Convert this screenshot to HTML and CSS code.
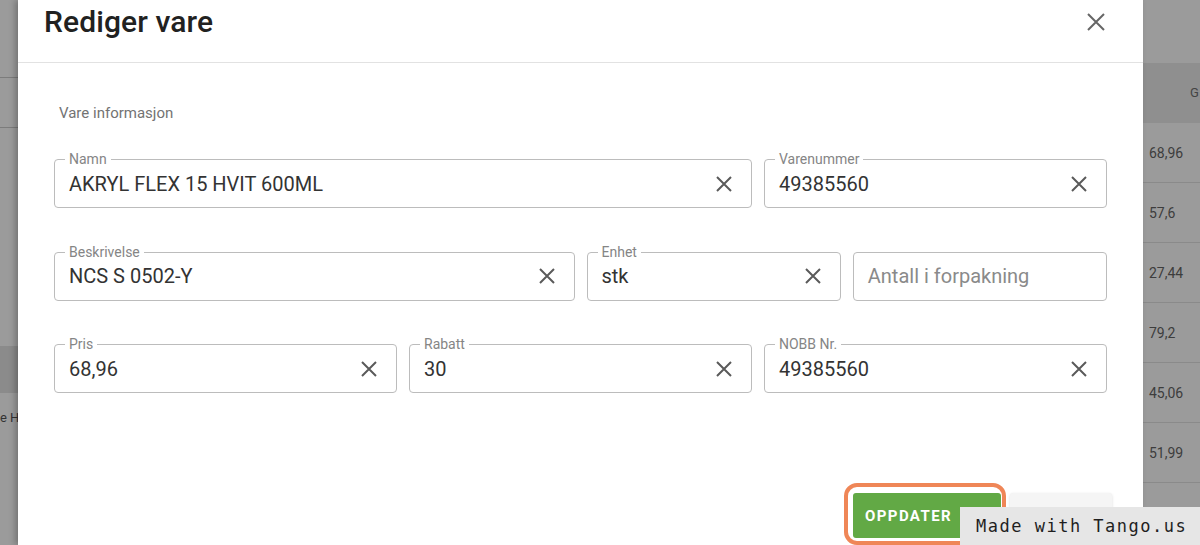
FILE: index.html
```html
<!DOCTYPE html>
<html>
<head>
    <title>Rediger vare</title>
    <link rel="stylesheet" href="styles.css">
</head>
<body>
    <div class="backdrop">
        <div class="under-left">
            <div class="rule"></div>
            <div class="rule"></div>
            <div class="shade"></div>
            <div class="cut-text">e H</div>
        </div>
        <div class="under-col">
            <div class="col-head">G</div>
            <div class="cell">68,96</div>
            <div class="cell">57,6</div>
            <div class="cell">27,44</div>
            <div class="cell">79,2</div>
            <div class="cell">45,06</div>
            <div class="cell">51,99</div>
            <div class="cell"></div>
        </div>
    </div>

    <div class="modal">
        <div class="modal-head">
            <h2>Rediger vare</h2>
            <button class="close" aria-label="Lukk">
                <svg width="18" height="18" viewBox="0 0 18 18"><path d="M1 1L17 17M17 1L1 17" stroke="#666" stroke-width="2" fill="none"/></svg>
            </button>
        </div>

        <div class="modal-body">
            <p class="section">Vare informasjon</p>

            <div class="form-grid">
                <div class="field span-8">
                    <label>Namn</label>
                    <span class="value">AKRYL FLEX 15 HVIT 600ML</span>
                    <svg class="clear" width="16" height="16" viewBox="0 0 16 16"><path d="M1 1L15 15M15 1L1 15"/></svg>
                </div>
                <div class="field span-4">
                    <label>Varenummer</label>
                    <span class="value">49385560</span>
                    <svg class="clear" width="16" height="16" viewBox="0 0 16 16"><path d="M1 1L15 15M15 1L1 15"/></svg>
                </div>

                <div class="field span-6">
                    <label>Beskrivelse</label>
                    <span class="value">NCS S 0502-Y</span>
                    <svg class="clear" width="16" height="16" viewBox="0 0 16 16"><path d="M1 1L15 15M15 1L1 15"/></svg>
                </div>
                <div class="field span-3">
                    <label>Enhet</label>
                    <span class="value">stk</span>
                    <svg class="clear" width="16" height="16" viewBox="0 0 16 16"><path d="M1 1L15 15M15 1L1 15"/></svg>
                </div>
                <div class="field span-3">
                    <span class="value placeholder">Antall i forpakning</span>
                </div>

                <div class="field span-4">
                    <label>Pris</label>
                    <span class="value">68,96</span>
                    <svg class="clear" width="16" height="16" viewBox="0 0 16 16"><path d="M1 1L15 15M15 1L1 15"/></svg>
                </div>
                <div class="field span-4">
                    <label>Rabatt</label>
                    <span class="value">30</span>
                    <svg class="clear" width="16" height="16" viewBox="0 0 16 16"><path d="M1 1L15 15M15 1L1 15"/></svg>
                </div>
                <div class="field span-4">
                    <label>NOBB Nr.</label>
                    <span class="value">49385560</span>
                    <svg class="clear" width="16" height="16" viewBox="0 0 16 16"><path d="M1 1L15 15M15 1L1 15"/></svg>
                </div>
            </div>
        </div>

        <div class="modal-foot">
            <div class="ring">
                <button class="btn-save">OPPDATER</button>
            </div>
            <button class="btn-cancel"></button>
        </div>
    </div>

    <div class="tango">Made with Tango.us</div>
</body>
</html>
```

FILE: styles.css
```css
html, body { margin: 0; height: 545px; overflow: hidden; }
body { font-family: Roboto, "Liberation Sans", sans-serif; background: #9b9b9b; position: relative; }

.backdrop { display: flex; height: 545px; }
.under-left { flex: 1; padding-top: 77px; }
.rule { height: 49px; border-top: 1px solid #7c7c7c; }
.rule + .rule { height: 218px; }
.shade { height: 47px; background: #8b8b8b; }
.cut-text { margin-top: 17px; font-size: 13px; color: #333; }

.under-col { width: 57px; padding-top: 63px; }
.col-head { height: 60px; background: #8f8f8f; color: #444; font-size: 13px; line-height: 60px; padding-left: 47px; box-sizing: border-box; }
.cell { height: 60px; border-bottom: 1px solid #8a8a8a; box-sizing: border-box; line-height: 60px; padding-left: 6px; font-size: 14px; color: #3d3d3d; }

.modal { position: absolute; left: 18px; top: 0; width: 1125px; height: 545px; background: #fff; box-shadow: -3px 0 6px rgba(0, 0, 0, 0.25); }
.modal-head { height: 63px; box-sizing: border-box; padding: 4px 38px 0 26px; border-bottom: 1px solid #e2e2e2; display: flex; justify-content: space-between; align-items: flex-start; }
.modal-head h2 { margin: 0; font-size: 30px; line-height: 36px; font-weight: 500; color: #212121; letter-spacing: 0.1px; }
.close { background: none; border: none; padding: 0; height: 36px; display: flex; align-items: center; cursor: pointer; }

.modal-body { padding: 40px 36px 0; }
.section { margin: 0 0 36px 5px; font-size: 15px; line-height: 20px; color: #737373; }

.form-grid { display: grid; grid-template-columns: repeat(12, 1fr); column-gap: 12px; row-gap: 43.5px; }
.span-3 { grid-column: span 3; }
.span-4 { grid-column: span 4; }
.span-6 { grid-column: span 6; }
.span-8 { grid-column: span 8; }

.field { position: relative; height: 49px; box-sizing: border-box; border: 1px solid #bcbcbc; border-radius: 4px; display: flex; align-items: center; padding: 0 19px 0 14px; }
.field label { position: absolute; top: -9px; left: 10px; padding: 0 4px; background: #fff; font-size: 14px; line-height: 16px; color: #858585; }
.value { flex: 1; font-size: 20px; color: #333; }
.placeholder { color: #8a8a8a; }
.clear path { stroke: #5a5a5a; stroke-width: 2; fill: none; }

.modal-foot { display: flex; justify-content: flex-end; align-items: flex-start; gap: 4px; padding-right: 31px; margin-top: 90px; }
.ring { border: 4px solid #ef8657; border-radius: 13px; padding: 6px 1px 3px 5px; }
.btn-save { width: 148px; height: 45px; border: none; border-radius: 3px; background: #62a945; color: #fff; font-family: Roboto, sans-serif; font-size: 15px; font-weight: 700; letter-spacing: 1.4px; text-align: left; padding: 0 0 0 12px; cursor: pointer; }
.btn-cancel { width: 102px; height: 45px; margin-top: 10px; border: none; border-radius: 3px; background: #f5f5f5; box-shadow: 0 1px 3px rgba(0, 0, 0, 0.15); }

.tango { position: absolute; right: 0; bottom: 0; width: 240px; height: 38px; box-sizing: border-box; padding-left: 16px; background: #e6e6e6; font-family: "DejaVu Sans Mono", monospace; font-size: 17px; line-height: 38px; letter-spacing: 1.5px; color: #1f1f1f; }
```
